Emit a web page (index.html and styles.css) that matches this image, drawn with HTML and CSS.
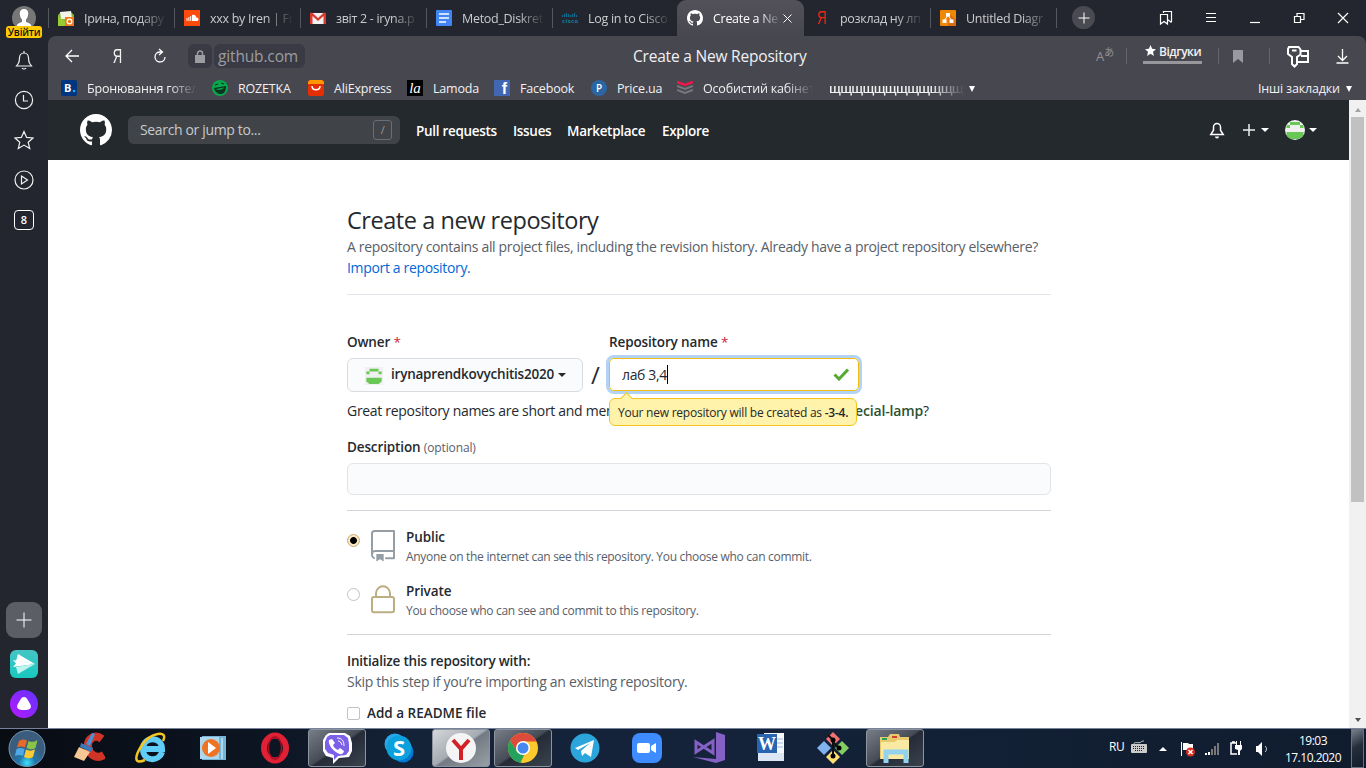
FILE: index.html
```html
<!DOCTYPE html>
<html lang="uk">
<head>
<meta charset="utf-8">
<title>Create a New Repository</title>
<link rel="stylesheet" href="styles.css">
</head>
<body>
<svg width="0" height="0" class="defs">
  <defs>
    <symbol id="mark" viewBox="0 0 16 16"><path fill="#fff" d="M8 0C3.58 0 0 3.58 0 8c0 3.54 2.29 6.53 5.47 7.59.4.07.55-.17.55-.38 0-.19-.01-.82-.01-1.49-2.01.37-2.53-.49-2.69-.94-.09-.23-.48-.94-.82-1.13-.28-.15-.68-.52-.01-.53.63-.01 1.08.58 1.23.82.72 1.21 1.87.87 2.33.66.07-.52.28-.87.51-1.07-1.78-.2-3.64-.89-3.64-3.95 0-.87.31-1.59.82-2.15-.08-.2-.36-1.02.08-2.12 0 0 .67-.21 2.2.82.64-.18 1.32-.27 2-.27.68 0 1.36.09 2 .27 1.53-1.04 2.2-.82 2.2-.82.44 1.1.16 1.92.08 2.12.51.56.82 1.27.82 2.15 0 3.07-1.87 3.75-3.65 3.95.29.25.54.73.54 1.48 0 1.07-.01 1.93-.01 2.2 0 .21.15.46.55.38A8.01 8.01 0 0 0 16 8c0-4.42-3.58-8-8-8z"/></symbol>
    <symbol id="avatar" viewBox="0 0 20 20"><rect width="20" height="20" fill="#f0f0f0"/><path fill="#68c755" d="M5 2h10v3H5zM1.500 5H5v3H1.500zM15 5h3.500v3H15zM1.500 12h17v4L15 19H5l-3.500-3z"/></symbol>
  </defs>
</svg>
<div class="screen">
  <div class="browser">
    <aside class="side">
      <div class="login">
        <svg width="24" height="24" viewBox="0 0 24 24"><circle cx="12" cy="12" r="12" fill="#777"/><path fill="#fff" d="M12 3c-3 0-4.500 2-4.200 5 .2 2.500 1 4.500 2.200 5.500v2.500c-2 .8-4.500 1.500-5.500 3.500a12 12 0 0 0 15 0c-1-2-3.500-2.700-5.500-3.500v-2.500c1.200-1 2-3 2.200-5.500C16.500 5 15 3 12 3z"/></svg>
        <span class="login-tag">Увійти</span>
      </div>
      <svg class="s-icon" viewBox="0 0 20 20"><path d="M10 1v2M4 14c1.200-1.500 1.500-3 1.500-6 0-3 2-5 4.500-5s4.500 2 4.500 5c0 3 .3 4.500 1.500 6l1.500 2h-15zM8 18c1 1.300 3 1.300 4 0"/></svg>
      <svg class="s-icon" viewBox="0 0 20 20"><circle cx="10" cy="10" r="8.600"/><path d="M9.500 5v6h4.500"/></svg>
      <svg class="s-icon" viewBox="0 0 20 20"><path d="M10 1.500l2.600 5.900 6.400.6-4.800 4.200 1.500 6.300-5.700-3.400-5.700 3.400 1.500-6.300L1 8l6.400-.6z"/></svg>
      <svg class="s-icon" viewBox="0 0 20 20"><circle cx="10" cy="10" r="9"/><path d="M7.500 6l6 4-6 4z"/></svg>
      <div class="s-count">8</div>
      <div class="s-fill"></div>
      <div class="s-add"><svg width="16" height="16" viewBox="0 0 16 16"><path d="M8 .5v15M.5 8h15" stroke="#fff"/></svg></div>
      <svg class="s-app" viewBox="0 0 28 28"><defs><linearGradient id="teal" x2="0" y2="1"><stop stop-color="#45c5c5"/><stop offset="1" stop-color="#18c9c0"/></linearGradient></defs><rect width="28" height="28" rx="6" fill="url(#teal)"/><path fill="#fff" d="M8 4l17 10-19-3z"/><path fill="#fff" d="M3 10l22 4-22 3 3-3.500z"/><path fill="#bff4ef" d="M6 17l19-3-17 10z"/></svg>
      <svg class="s-app" viewBox="0 0 28 28"><defs><linearGradient id="vio" x1="1" x2="0" y2="1"><stop stop-color="#6034ff"/><stop offset="1" stop-color="#b818ff"/></linearGradient></defs><circle cx="14" cy="14" r="14" fill="url(#vio)"/><path fill="#fff" d="M14 7c2 0 3 1.500 4.600 4.200 1.700 2.700 2.700 4.600 2.200 6.300-.6 2-3.500 2.500-6.800 2.500s-6.200-.5-6.800-2.500c-.5-1.700.5-3.600 2.200-6.300C11 8.500 12 7 14 7z"/></svg>
    </aside>
    <div class="window">
      <div class="tabs">
        <div class="tab"><svg class="fav" viewBox="0 0 16 16"><path fill="#7eb82e" d="M0 5l3-3h10l3 3v10H0z"/><path fill="#f3f3e8" d="M2 2l11-1 1 8H3z"/><path fill="#9c3" d="M0 6l8 6v4H0z"/><rect x="7" y="7" width="9" height="9" fill="#f27a1d"/><circle cx="11.500" cy="11.500" r="2.300" fill="none" stroke="#fff" stroke-width="1.300"/></svg><span class="t-text">Ірина, подару</span></div>
        <div class="tab"><svg class="fav" viewBox="0 0 16 16"><rect width="16" height="16" fill="#ff4a0a"/><path fill="#fff" d="M8 5c3-1 4 1 4.300 2.500C15 7 15 11 13 11H8zM6.200 6h1v5h-1zM4.400 7h1v4h-1zM2.500 8h1v3h-1z"/></svg><span class="t-text">xxx by Iren | Fr</span></div>
        <div class="tab"><svg class="fav" viewBox="0 0 16 16"><path fill="#f2f2f2" d="M1 3h14v11H1z"/><path fill="#d93a30" d="M0 3l2-.5L8 8l6-5.500 2 .5v11h-2.500V6L8 11 2.500 6v8H0z"/></svg><span class="t-text">звіт 2 - iryna.p</span></div>
        <div class="tab"><svg class="fav" viewBox="0 0 16 16"><rect width="16" height="16" rx="1" fill="#4285f4"/><path stroke="#fff" stroke-width="1.600" d="M3 4h10M3 8h10M3 12h7"/></svg><span class="t-text">Metod_Diskret</span></div>
        <div class="tab"><svg class="fav" viewBox="0 0 16 16"><path stroke="#16698b" stroke-width="1.200" d="M.5 5v2M2.500 4v3M4.500 3v4M6.500 4v3M8.500 5v2M10.500 4v3M12.500 3v4M14.500 5v2"/><text x="0" y="13" class="cisco" textLength="16">cisco</text></svg><span class="t-text">Log in to Cisco</span></div>
        <div class="tab tab-on"><svg class="fav"><use href="#mark"/></svg><span class="t-text t-short">Create a Ne</span><svg class="x" width="9" height="9" viewBox="0 0 9 9"><path d="M.5.5l8 8M8.500.5l-8 8" stroke="#fff"/></svg></div>
        <div class="tab no-line"><span class="fav ya">Я</span><span class="t-text">розклад ну лп</span></div>
        <div class="tab"><svg class="fav" viewBox="0 0 16 16"><rect width="16" height="16" rx="1" fill="#f08705"/><path fill="#df6c0c" d="M9 3l7 7v6H8z"/><path stroke="#fff" d="M8 5l-4 6M8 5l4 6"/><path fill="#fff" d="M6 3h4v3.500H6zM2.500 9.500h4V13h-4zM9.500 9.500h4V13h-4z"/></svg><span class="t-text">Untitled Diagr</span></div>
        <div class="tab-end"><span class="newtab"><svg width="12" height="12" viewBox="0 0 12 12"><path d="M6 .5v11M.5 6h11" stroke="#fff"/></svg></span></div>
        <div class="controls">
          <svg width="14" height="16" viewBox="0 0 14 16"><path d="M4.500 3V1.500h8V12M1.500 4.500h7v9.500L5 11.500 1.500 14zM8.500 9.500l2 1.500 2 1.500"/></svg>
          <svg width="12" height="16" viewBox="0 0 12 16"><path d="M1 3.500h10M1 7.500h10M1 11.500h10"/></svg>
          <svg width="12" height="16" viewBox="0 0 12 16"><path d="M1 12.500h10"/></svg>
          <svg width="12" height="16" viewBox="0 0 12 16"><path d="M4 6V3.500h7v6H7.500M1.500 6.500h6v6h-6z"/></svg>
          <svg width="12" height="16" viewBox="0 0 12 16"><path d="M1 3l10 10M11 3L1 13"/></svg>
        </div>
      </div>
      <div class="chrome">
        <div class="toolbar">
          <svg class="tb-back" width="16" height="16" viewBox="0 0 16 16"><path d="M15 8H2M8 2L2 8l6 6"/></svg>
          <span class="tb-ya">Я</span>
          <svg class="tb-reload" width="14" height="16" viewBox="0 0 14 16"><path d="M9 4H6.500a5 5 0 1 0 5.500 5M6 1l3.500 3L6 7"/></svg>
          <span class="lock"><svg width="10" height="13" viewBox="0 0 10 13"><path fill="#9c9da2" stroke="none" d="M0 5h10v8H0z"/><path d="M2.500 5V3.500a2.500 2.500 0 0 1 5 0V5" class="shackle"/></svg></span>
          <span class="host">github.com</span>
          <span class="page-title">Create a New Repository</span>
          <span class="translate">A<sup>あ</sup></span>
          <i class="bar"></i>
          <span class="reviews"><svg width="11" height="11" viewBox="0 0 11 11"><path class="star" d="M5.500 0l1.600 3.800 3.900.4-3 2.600.9 4.200-3.400-2.200L2.100 11 3 6.800 0 4.200l3.900-.4z"/></svg>Відгуки</span>
          <i class="bar bar2"></i>
          <svg class="bm" width="10" height="13" viewBox="0 0 10 13"><path d="M0 0h10v13L5 9l-5 4z" fill="#999a9f" stroke="none"/></svg>
          <i class="bar bar3"></i>
          <svg class="keys" width="24" height="23" viewBox="0 0 24 23"><path stroke-width="2" d="M3 2h9.500l2 2.500v5L11 12v7l-2.500 2.500L6 19v-7L2 9V4zM6 5.500h4.500M15 6h7v11H11M15 11h7"/></svg>
          <svg class="down" width="13" height="16" viewBox="0 0 13 16"><path d="M6.500 1v11M2 8l4.500 4.500L11 8M.5 15h12"/></svg>
        </div>
        <div class="bookmarks">
          <div class="b b1"><svg class="fav" viewBox="0 0 16 16"><rect width="16" height="16" rx="2" fill="#003580"/><text x="3" y="12" class="booking">B</text><circle cx="13" cy="11" r="1.300" fill="#18a9ee"/></svg><span class="fade">Бронювання готел</span></div>
          <div class="b b2"><svg class="fav" viewBox="0 0 16 16"><circle cx="8" cy="8" r="8" fill="#0aa54c"/><path fill="#0c3320" d="M2 8l12-2c0 5-2 8-5 8s-6-2-7-6z"/><path fill="#0aa54c" d="M4 9l8-1.500c-1 2-6 3.500-8 1.500z"/><path stroke="#0c3320" d="M3 5l3-1M9 3l3 1"/></svg><span>ROZETKA</span></div>
          <div class="b b3"><svg class="fav" viewBox="0 0 16 16"><rect width="16" height="16" rx="2" fill="#e62e04"/><path fill="#ff9700" d="M0 4V2l2-2h12l2 2v2z"/><path fill="none" stroke="#fff" stroke-width="1.500" d="M4 6c0 5 8 5 8 0"/></svg><span>AliExpress</span></div>
          <div class="b b4"><span class="fav la">la</span><span>Lamoda</span></div>
          <div class="b b5"><span class="fav fb">f</span><span>Facebook</span></div>
          <div class="b b6"><span class="fav price">P</span><span>Price.ua</span></div>
          <div class="b b7"><svg class="fav" viewBox="0 0 16 16"><path fill="none" stroke="#f0164b" stroke-width="2.500" d="M0 2l8 3 8-3"/><path fill="none" stroke="#77787c" stroke-width="2" d="M0 6l8 3 8-3M0 10l8 3 8-3"/></svg><span class="fade">Особистий кабінет</span></div>
          <div class="b b8"><span class="fade">щщщщщщщщщщщщр</span><i class="tri"></i></div>
          <div class="b other"><span>Інші закладки</span><i class="tri"></i></div>
        </div>
      </div>
      <div class="viewport">
        <div class="page">
          <header class="gh">
            <svg class="gh-logo"><use href="#mark"/></svg>
            <div class="search"><span>Search or jump to...</span><kbd>/</kbd></div>
            <nav><a class="n1">Pull requests</a><a class="n2">Issues</a><a class="n3">Marketplace</a><a class="n4">Explore</a></nav>
            <svg class="bell" width="16" height="17" viewBox="0 0 16 17"><path fill="none" stroke="#fff" stroke-width="1.500" d="M8 1.500A3.500 3.500 0 0 0 4.500 5v3.200L1.800 12.500h12.400L11.500 8.200V5A3.500 3.500 0 0 0 8 1.500z"/><path fill="#fff" d="M6 14.500h4a2 2 0 0 1-4 0z"/></svg>
            <svg class="plus" width="12" height="12" viewBox="0 0 12 12"><path d="M6 0v12M0 6h12" stroke="#eee" stroke-width="1.500"/></svg>
            <i class="caret"></i>
            <svg class="me"><use href="#avatar"/></svg>
            <i class="caret caret2"></i>
          </header>
          <main>
            <h1>Create a new repository</h1>
            <p class="lead">A repository contains all project files, including the revision history. Already have a project repository elsewhere?<br><a>Import a repository.</a></p>
            <div class="names">
              <div class="owner"><label>Owner <b>*</b></label><div class="select"><svg><use href="#avatar"/></svg><span>irynaprendkovychitis2020</span><i class="caret"></i></div></div>
              <div class="slash">/</div>
              <div class="repo"><label>Repository name <b>*</b></label>
                <div class="input"><span>лаб 3,4</span><i class="cursor"></i><svg width="16" height="13" viewBox="0 0 16 13"><path fill="none" stroke="#55ab32" stroke-width="3" d="M1.500 6.500l4.500 4.500L15 1.500"/></svg></div>
                <div class="tip">Your new repository will be created as <b>-3-4.</b></div>
              </div>
            </div>
            <div class="hint"><span>Great repository names are short and mem</span><span><strong>ecial-lamp</strong>?</span></div>
            <label class="desc-label">Description <small>(optional)</small></label>
            <div class="desc"></div>
            <div class="visibility">
              <div class="choice"><i class="radio on"></i><svg width="32" height="32" viewBox="0 0 24 24"><path fill="#959da5" fill-rule="evenodd" d="M3 2.750A2.750 2.750 0 0 1 5.750 0h14.500a.75.75 0 0 1 .75.75v20.500a.75.75 0 0 1-.75.75h-6a.75.75 0 0 1 0-1.500h5.250v-4H6A1.500 1.500 0 0 0 4.500 18v.75c0 .716.43 1.334 1.050 1.605a.75.75 0 0 1-.6 1.374A3.250 3.250 0 0 1 3 18.750zM19.500 1.500V15H6c-.546 0-1.059.146-1.500.401V2.750c0-.69.56-1.250 1.250-1.250z"/><path fill="#959da5" d="M7 18.250a.25.25 0 0 1 .25-.25h5a.25.25 0 0 1 .25.25v5.010a.25.25 0 0 1-.397.201l-2.206-1.604a.25.25 0 0 0-.294 0L7.397 23.460a.25.25 0 0 1-.397-.2z"/></svg><div><h3>Public</h3><p>Anyone on the internet can see this repository. You choose who can commit.</p></div></div>
              <div class="choice"><i class="radio"></i><svg width="32" height="32" viewBox="0 0 24 24"><path fill="none" stroke="#bbae82" stroke-width="1.500" d="M6.750 9.500V7a5.250 5.250 0 0 1 10.500 0v2.500M5.250 9.750h13.500a1.500 1.500 0 0 1 1.500 1.500v8.500a1.500 1.500 0 0 1-1.500 1.500H5.250a1.500 1.500 0 0 1-1.500-1.500v-8.500a1.500 1.500 0 0 1 1.500-1.500z"/></svg><div><h3>Private</h3><p>You choose who can see and commit to this repository.</p></div></div>
            </div>
            <h3 class="init">Initialize this repository with:</h3>
            <p class="skip">Skip this step if you’re importing an existing repository.</p>
            <div class="readme"><i class="box"></i><span>Add a README file</span></div>
          </main>
        </div>
        <div class="scroll"><i class="up"></i><i class="thumb"></i><i class="dn"></i></div>
      </div>
    </div>
  </div>
  <footer class="taskbar">
    <svg class="start" width="40" height="40" viewBox="0 0 40 40"><defs><radialGradient id="orb" cy=".9"><stop stop-color="#3fe4fc"/><stop offset=".45" stop-color="#1f78ae"/><stop offset="1" stop-color="#3a5d7d"/></radialGradient></defs><circle cx="20" cy="19.500" r="18" fill="url(#orb)" stroke="#7194ae"/><path fill="#e96a28" d="M12 12c3-2 5-2 8-.5L18 18.500c-3-1.500-5-1.500-8 0z"/><path fill="#8bc443" d="M21.500 12c3 1.500 6 1 9-1l-2 8c-3 2-5.500 1.500-9 0z"/><path fill="#4fa9e6" d="M9.500 20c3-1.500 5-1.500 8 0L16 27c-3-1.500-5-1.500-8 0z"/><path fill="#fcc934" d="M19 20.500c3 1.500 5.500 1.500 9 0l-2 7.500c-3 2-5.500 1.500-9 0z"/></svg>
    <div class="apps">
      <div class="app"><svg viewBox="0 0 32 32"><path fill="none" stroke="#cf3427" stroke-width="8" d="M29 7c-8-6-15 1-14 8s8 13 16 8"/><path fill="#4c93d6" d="M19 1l3 1-5 12-4-2z"/><path fill="#3978b9" d="M8 11l12 5-2 4-11-5z"/><path fill="#f6c795" d="M6 15l11 5-6 9-10-4z"/></svg></div>
      <div class="app"><svg viewBox="0 0 32 32"><path fill="none" stroke="#60cdf8" stroke-width="6" d="M27 20c-3 10-19 10-19-3S27 4 27 17H9"/><path fill="none" stroke="#f3c622" stroke-width="2.500" d="M28 9C34-3 15 1 7 13S-1 33 10 28"/></svg></div>
      <div class="app"><svg viewBox="0 0 32 32"><path fill="#74b4d6" d="M5 4h24v24H5z"/><path fill="#acd7ec" d="M3 5h19v22H3zM24 6h2v21h-2z"/><circle cx="14" cy="16" r="9" fill="#ee7423"/><path fill="#fff" d="M11 10l8 6-8 6z"/></svg></div>
      <div class="app"><svg viewBox="0 0 32 32"><ellipse cx="16" cy="16" rx="11" ry="12.500" fill="none" stroke="#df2035" stroke-width="6"/><ellipse cx="16" cy="16" rx="6.500" ry="11" fill="none" stroke="#a70e20" stroke-width="1.500"/></svg></div>
      <div class="app open"><svg viewBox="0 0 32 32"><path fill="#fff" d="M8 1h16l5 3 2 7v8l-3 6-10 1-6 6v-6l-7-2-3-5V8l3-5z"/><path fill="#7d60e8" d="M9 3h14l4 3 1 6v7l-3 4-8 1-4 4v-5l-6-2-3-4v-7l2-5z"/><path fill="#fff" d="M11 7l3 4-2 2c1 3 3 4 5 5l2-2 4 3c-1 4-4 4-8 1-5-3-8-9-7-12z"/><path fill="none" stroke="#fff" d="M16 6c5 0 7 3 7 8M17 9c2 0 3 1 4 4"/></svg></div>
      <div class="app"><svg viewBox="0 0 32 32"><circle cx="12" cy="12" r="10.500" fill="#28a8ea"/><circle cx="20" cy="20" r="10.500" fill="#0078d4"/><circle cx="16" cy="16" r="12.500" fill="#0ca0dc"/><text x="16" y="24" class="skype">S</text></svg></div>
      <div class="app open lit"><svg viewBox="0 0 32 32"><circle cx="16" cy="16" r="15" fill="#f4f4f4"/><path fill="none" stroke="#d22027" stroke-width="4" d="M8 8l8 9 8-9M16 17v11"/></svg></div>
      <div class="app open"><svg viewBox="0 0 32 32"><circle cx="16" cy="16" r="15" fill="#fbc92d"/><path fill="#dd4b3b" d="M3 8.500a15 15 0 0 1 26.500 1H16l-7 9z"/><path fill="#24a15b" d="M3 8.500l7.500 12 7 1.500-4 8.800A15 15 0 0 1 3 8.500z"/><circle cx="16" cy="16" r="7" fill="#fff"/><circle cx="16" cy="16" r="5.500" fill="#4688f1"/></svg></div>
      <div class="app"><svg viewBox="0 0 32 32"><circle cx="16" cy="16" r="14.500" fill="#2ca5dc"/><path fill="#fff" d="M6 16l19-8-3 17-6-4-3 3-1-5 9-8-12 7z"/></svg></div>
      <div class="app"><svg viewBox="0 0 32 32"><rect x="1" y="1" width="30" height="30" rx="8" fill="#3e8cff"/><rect x="6" y="11" width="13" height="10" rx="2" fill="#fff"/><path fill="#fff" d="M20 14l5-3v10l-5-3z"/></svg></div>
      <div class="app"><svg viewBox="0 0 32 32"><path fill="#8661c5" d="M23 0l9 3v25l-9 3L0 25l23 2z"/><path fill="none" stroke="#8661c5" stroke-width="3" d="M3 10v10L20 9v12z"/></svg></div>
      <div class="app"><svg viewBox="0 0 32 32"><path fill="#f4f7fb" d="M9 1h20v28H9z"/><path stroke="#a5bbdc" d="M22 7h6M22 11h6M22 15h6"/><path fill="#2864b0" d="M2 2h20v19H2z"/><text x="3" y="18" class="word">W</text><path fill="#dce6f4" d="M3 21h26v8H3z"/></svg></div>
      <div class="app"><svg viewBox="0 0 32 32"><path fill="#f17373" d="M16 0l7 7-7 7-7-7z"/><path fill="#80b2ef" d="M7 9l7 7-7 7-7-7z"/><path fill="#83cd62" d="M25 9l7 7-7 7-7-7z"/><path fill="#ffe071" d="M16 18l7 7-7 7-7-7z"/><path stroke="#111" stroke-width="2" fill="none" d="M11 3l5 5v16M16 10l6 6"/><circle cx="16" cy="8" r="2.500"/><circle cx="22" cy="16" r="2.500"/><circle cx="16" cy="24" r="2.500"/></svg></div>
      <div class="app open"><svg viewBox="0 0 32 32"><path fill="#e8c96c" d="M1 5h8l2-3h9l1 3h9v22H1z"/><path fill="#fae9a2" d="M2 10h14l2-2h12v19H2z"/><path stroke="#d14132" stroke-width="2" d="M13 5h5"/><path stroke="#26a05b" stroke-width="2" d="M3 7h5"/><path fill="none" stroke="#92d2ec" stroke-width="5" d="M7 31V20h20v11"/></svg></div>
    </div>
    <div class="tray">
      <span class="lang">RU</span>
      <svg class="kb" width="16" height="16" viewBox="0 0 16 16"><path fill="none" stroke="#ccc" d="M3 5c0-3 5 0 7-2 1-1 2-1 3-1"/><rect y="5" width="16" height="9" rx="1" fill="#ccc"/><path stroke="#222" stroke-dasharray="1 1" d="M2 7.500h12M2 9.500h12M4 11.500h8"/></svg>
      <svg class="tu" width="8" height="4"><path fill="#fff" d="M0 4l4-4 4 4z"/></svg>
      <svg class="flag" width="16" height="16" viewBox="0 0 16 16"><path fill="#fff" d="M1 1h1v14H1zM3 2h5l1 1h4v7H8L7 9H3z"/><circle cx="10.500" cy="11" r="4.500" fill="#d92b22"/><path stroke="#fff" stroke-width="1.500" d="M8.500 9l4 4M12.500 9l-4 4"/></svg>
      <svg class="net" width="15" height="12" viewBox="0 0 15 12"><path fill="#fff" d="M0 10h2v2H0zM3 9h2v3H3z"/><path fill="#777" d="M6 6h2v6H6zM9 3h2v9H9zM12 0h2v12h-2z"/></svg>
      <svg class="bat" width="14" height="15" viewBox="0 0 14 15"><path fill="none" stroke="#fff" stroke-width="1.500" d="M7 2H2v11h6M3 1h3"/><path fill="#fff" d="M7 0h1v4h3V0h1v4h1v4l-2 2v4H9V9L6 8V4h1z"/></svg>
      <svg class="vol" width="12" height="14" viewBox="0 0 12 14"><path fill="#fff" d="M0 4h2l4-4v14l-4-4H0z"/><path fill="none" stroke="#ddd" d="M9 4c2 2 2 4 0 6"/></svg>
      <div class="clock"><span>19:03</span><span class="date">17.10.2020</span></div>
    </div>
    <div class="peek"></div>
  </footer>
</div>
</body>
</html>
```

FILE: styles.css
```css
* { box-sizing: border-box; }
body { margin: 0; overflow: hidden; font-family: "Open Sans", "Noto Sans", sans-serif; }
svg { display: block; flex: none; }
i { font-style: normal; }
.defs { position: absolute; }
.screen { width: 1366px; height: 768px; display: flex; flex-direction: column; overflow: hidden; }
.browser { height: 728px; display: flex; background: #23262f; }

/* browser side panel */
.side { width: 48px; display: flex; flex-direction: column; align-items: center; padding-top: 6px; }
.login { height: 34px; display: flex; flex-direction: column; align-items: center; margin-bottom: 10px; }
.login-tag { width: 36px; height: 12px; margin-top: -4px; z-index: 1; border-radius: 3px; background: #ffcc00; color: #111; font-size: 10px; font-weight: 600; line-height: 12px; text-align: center; letter-spacing: -.2px; }
.s-icon { width: 20px; height: 20px; margin-bottom: 20px; fill: none; stroke: #f1f1f2; stroke-width: 1.2; }
.s-count { width: 20px; height: 20px; border: 1.500px solid #fff; border-radius: 4px; color: #fff; font-size: 11px; font-weight: 600; line-height: 17px; text-align: center; }
.s-fill { flex: 1; }
.s-add { width: 36px; height: 36px; border-radius: 9px; background: #5c5e66; display: flex; align-items: center; justify-content: center; margin-bottom: 12px; }
.s-app { width: 28px; height: 28px; margin-bottom: 12px; }
.s-app:last-child { margin-bottom: 10px; }

/* tab strip */
.window { width: 1318px; display: flex; flex-direction: column; }
.tabs { height: 36px; display: flex; color: #cbcbce; font-size: 12.500px; letter-spacing: -.3px; }
.tab { width: 126px; display: flex; align-items: center; padding-left: 10px; background: linear-gradient(#55575f, #55575f) 0 8px / 1px 20px no-repeat; }
.tab:nth-child(5) { width: 125px; }
.no-line { background: none; }
.fav { width: 16px; height: 16px; flex: none; }
.t-text { width: 83px; margin-left: 10px; overflow: hidden; white-space: nowrap; mask-image: linear-gradient(90deg, #000 68%, transparent); }
.tab-on { width: 127px; background: linear-gradient(#53525b, #474750); border-radius: 9px 9px 0 0; color: #fff; }
.t-short { width: 68px; }
.x { margin-left: 2px; }
.ya { color: #f22a12; font: 19px/16px "Liberation Sans", sans-serif; text-align: center; transform: scaleX(.7); }
.cisco { font: bold 6px "Open Sans", sans-serif; fill: #16799b; }
.tab-end { width: 86px; padding: 6px 0 0 16px; background: linear-gradient(#55575f, #55575f) 0 8px / 1px 20px no-repeat; }
.newtab { width: 23px; height: 23px; border-radius: 50%; background: #4a4a53; display: flex; align-items: center; justify-content: center; }
.controls { display: flex; align-items: center; gap: 32px; padding-left: 17px; }
.controls svg { fill: none; stroke: #fff; stroke-width: 1.2; }

/* address bar and bookmarks */
.chrome { height: 64px; background: #474750; border-radius: 8px 8px 0 0; color: #f1f1f2; }
.toolbar { height: 40px; display: flex; align-items: center; padding-left: 16px; }
.toolbar svg { fill: none; stroke: #fff; stroke-width: 1.3; }
.toolbar .shackle { stroke: #9c9da2; stroke-width: 1.5; }
.toolbar .star { fill: #fff; stroke: none; }
.tb-ya { width: 14px; margin-left: 30px; font: 21px/20px "Liberation Sans", sans-serif; transform: scaleX(.62); }
.toolbar .tb-reload { margin-left: 29px; }
.lock { width: 24px; height: 24px; margin-left: 21px; border-radius: 6px; background: #393a43; display: flex; align-items: center; justify-content: center; }
.host { width: 91px; height: 24px; margin-left: 2px; padding-left: 4px; border-radius: 6px; background: #393a43; color: #9c9da2; font-size: 15.500px; line-height: 25px; letter-spacing: -.15px; }
.page-title { width: 176px; margin-left: 328px; font-size: 15.500px; letter-spacing: -.2px; white-space: nowrap; }
.translate { width: 20px; margin-left: 287px; color: #929298; font-size: 13px; line-height: 16px; white-space: nowrap; }
.translate sup { font: 10px/8px "Noto Sans CJK JP", sans-serif; }
.bar { width: 1px; height: 16px; margin-left: 10px; background: #65656d; }
.reviews { width: 59px; height: 19px; margin: -4px 0 0 16px; border-bottom: 3px solid #97979c; font-size: 12px; font-weight: 600; line-height: 14px; letter-spacing: -.5px; display: flex; white-space: nowrap; padding-left: 2px; gap: 3px; }
.bar2 { margin-left: 16px; }
.bm { margin-left: 14px; }
.bar3 { margin-left: 26px; }
.keys { margin-left: 16px; }
.down { margin-left: 26px; }
.bookmarks { height: 24px; display: flex; align-items: flex-start; padding-left: 13px; font-size: 12.500px; letter-spacing: -.18px; line-height: 17px; white-space: nowrap; }
.b { display: flex; gap: 10px; padding-top: 4px; }
.b1 { width: 151px; } .b2 { width: 96px; } .b3 { width: 99px; } .b4 { width: 87px; }
.b5 { width: 97px; } .b6 { width: 86px; } .b7 { width: 152px; }
.b8 { width: 429px; gap: 4px; align-items: center; }
.fade { width: 110px; overflow: hidden; mask-image: linear-gradient(90deg, #000 75%, transparent); }
.b8 .fade { width: 136px; letter-spacing: -.6px; font-weight: 600; }
.other { gap: 6px; align-items: center; }
.tri { border: 3.500px solid transparent; border-top: 6px solid #fff; border-bottom: 0; }
.booking { font: bold 11px "Open Sans", sans-serif; fill: #fff; }
.la { background: #000; color: #fff; font: italic 15px/16px "Liberation Serif", serif; text-align: center; }
.fb { background: #4267b2; color: #fff; font: bold 16px/18px "Liberation Sans", sans-serif; text-align: right; padding-right: 3px; }
.price { border-radius: 50%; background: #2b66a4; color: #fff; font-size: 10px; line-height: 16px; font-weight: 600; text-align: center; }

/* web page */
.viewport { height: 628px; display: flex; }
.page { width: 1301px; background: #fff; color: #24292e; font-size: 14px; overflow: hidden; }
.gh { height: 60px; background: #24292e; display: flex; align-items: center; padding: 0 0 0 32px; color: #fff; }
.gh-logo { width: 32px; height: 32px; }
.search { width: 272px; height: 28px; margin-left: 16px; padding: 0 8px 0 12px; border-radius: 6px; background: #404448; color: #c8c9cb; font-size: 14px; letter-spacing: -.35px; display: flex; align-items: center; justify-content: space-between; }
.search span { padding-bottom: 1px; }
.search kbd { width: 19px; height: 20px; border: 1px solid #6b6f74; border-radius: 3px; color: #999; font: 11px/18px "Open Sans", sans-serif; text-align: center; }
nav { display: flex; padding: 2px 0 0 16px; font-size: 13.500px; font-weight: 600; letter-spacing: -.3px; white-space: nowrap; }
.n1 { width: 97px; } .n2 { width: 54px; } .n3 { width: 95px; } .n4 { width: 50px; }
.bell { margin-left: 497px; }
.plus { margin-left: 18px; }
.caret { border: 4px solid transparent; border-top-color: currentColor; border-bottom: 0; }
.gh .caret { margin-left: 6px; }
.me { width: 20px; height: 20px; margin-left: 16px; border-radius: 50%; }
.gh .caret2 { margin-left: 4px; }
main { width: 704px; margin-left: 299px; padding-top: 43px; }
h1, h3, p { margin: 0; }
h1 { margin-bottom: -1px; font-size: 23.500px; font-weight: 400; line-height: 34px; letter-spacing: -.45px; }
.lead { height: 59px; border-bottom: 1px solid #e1e4e8; color: #586069; line-height: 21px; letter-spacing: -.34px; white-space: nowrap; }
.lead a { color: #0366d6; }
label { display: block; height: 21px; font-weight: 600; font-size: 13.500px; line-height: 21px; letter-spacing: -.13px; }
label b { color: #cb2431; font-weight: 400; }
.names { display: flex; margin-top: 37px; }
.select { width: 236px; height: 34px; margin-top: 5px; padding-left: 17px; border: 1px solid #d8dbdf; border-radius: 6px; background: #fafbfc; display: flex; align-items: center; font-size: 13.500px; font-weight: 600; letter-spacing: -.22px; }
.select svg { width: 18px; height: 18px; margin: 2px 8px 0 0; }
.select span { padding-bottom: 2px; }
.select .caret { margin-left: 4px; }
.slash { width: 26px; padding: 26px 0 0 8px; font-size: 24px; line-height: 34px; }
.repo { width: 250px; position: relative; }
.input { height: 33px; margin-top: 5px; padding: 0 9px 0 12px; border: 1px solid #f0bd10; border-radius: 5px; box-shadow: 0 0 0 3px #b3d3f4; display: flex; align-items: center; letter-spacing: -.35px; }
.cursor { width: 1px; height: 19px; background: #000; }
.input svg { margin-left: auto; }
.tip { position: absolute; z-index: 1; left: 0; top: 66px; width: 248px; height: 28px; padding-left: 8px; border: 1px solid #f4c51c; border-radius: 6px; background: #fff2ab; font-size: 12px; line-height: 27px; letter-spacing: -.24px; white-space: nowrap; }
.tip::before { content: ""; position: absolute; left: 12px; top: -5px; width: 8px; height: 8px; border: solid #f4c51c; border-width: 1px 0 0 1px; background: #fff2ab; transform: rotate(45deg); }
.tip b { font-weight: 600; }
.hint { width: 582px; height: 21px; margin-top: 8px; line-height: 21px; letter-spacing: -.3px; display: flex; justify-content: space-between; white-space: nowrap; }
.hint span + span { letter-spacing: -.15px; }
.hint strong { color: #2c5130; font-weight: 600; }
.desc-label { margin-top: 16px; }
.desc-label small { color: #586069; font-size: 12px; font-weight: 400; }
.desc { height: 32px; margin-top: 5px; border: 1px solid #e1e4e8; border-radius: 6px; background: #fafbfc; }
.visibility { height: 125px; margin-top: 15px; padding-top: 16px; border-top: 1px solid #d1d5da; border-bottom: 1px solid #d1d5da; }
.choice { height: 54px; display: flex; }
.choice > svg { margin: 3px 7px 0 7px; }
.choice h3, .init { font-size: 13.500px; font-weight: 600; line-height: 21px; }
.choice h3 { letter-spacing: -.1px; }
.init { letter-spacing: -.2px; }
.choice p { color: #586069; font-size: 12px; line-height: 18px; letter-spacing: -.3px; white-space: nowrap; }
.radio { width: 13px; height: 13px; margin-top: 7px; border: 1px solid #c2c2c2; border-radius: 50%; }
.radio.on { border-color: #c6ac7e; background: radial-gradient(circle, #000 3px, #fbe8c3 3.800px); }
.init { margin-top: 16px; }
.skip { margin-top: -1px; color: #586069; line-height: 21px; letter-spacing: -.29px; }
.readme { display: flex; align-items: center; gap: 7px; margin-top: 11px; font-size: 13.500px; font-weight: 600; line-height: 21px; }
.box { width: 13px; height: 13px; border: 1px solid #c2c2c2; border-radius: 2px; }
.scroll { width: 17px; padding: 8px 2px 6px; background: #f1f1f1; display: flex; flex-direction: column; align-items: center; }
.up, .dn { border: 3.500px solid transparent; }
.up { border-bottom: 4px solid #a3a3a3; border-top: 0; }
.dn { border-top: 4px solid #505050; border-bottom: 0; margin-top: auto; }
.thumb { width: 13px; height: 385px; margin-top: 5px; background: #c1c1c1; }

/* desktop taskbar */
.taskbar { height: 40px; display: flex; border-top: 1px solid #76839a; background: linear-gradient(90deg, #080c13, #0c1522 20%, #152339 30%, #14233a 52%, #101c2e); }
.start { margin-left: 7px; }
.apps { display: flex; gap: 4px; margin-left: 13px; }
.app { width: 58px; height: 38px; display: flex; align-items: center; justify-content: center; border-radius: 3px; }
.app svg { width: 32px; height: 32px; }
.open { border: 1px solid #8e949d; background: linear-gradient(145deg, #777e87, #454c56 48%, #252c37 52%, #3a424e); }
.lit { background: linear-gradient(145deg, #d5d7da, #a5abb2 48%, #737a83 52%, #999fa6); }
.skype { font: bold 22px "Open Sans", sans-serif; fill: #fff; text-anchor: middle; }
.word { font: bold 18px "Liberation Serif", serif; fill: #fff; }
.tray { width: 427px; display: flex; align-items: center; padding-left: 185px; color: #fff; }
.lang { width: 18px; margin-top: -5px; font-size: 12px; letter-spacing: -.5px; }
.kb { margin-left: 4px; margin-top: -4px; }
.tu { margin-left: 12px; }
.flag { margin-left: 13px; }
.net { margin-left: 9px; }
.bat { margin-left: 9px; }
.vol { margin-left: 13px; }
.clock { flex: 1; margin: 0 6px 0 13px; display: flex; flex-direction: column; align-items: center; font-size: 12px; line-height: 17px; letter-spacing: -.5px; }
.peek { width: 13px; border: 1px solid #67717f; background: linear-gradient(150deg, #77808b, #252e3b 45%, #121c2a); }
```
